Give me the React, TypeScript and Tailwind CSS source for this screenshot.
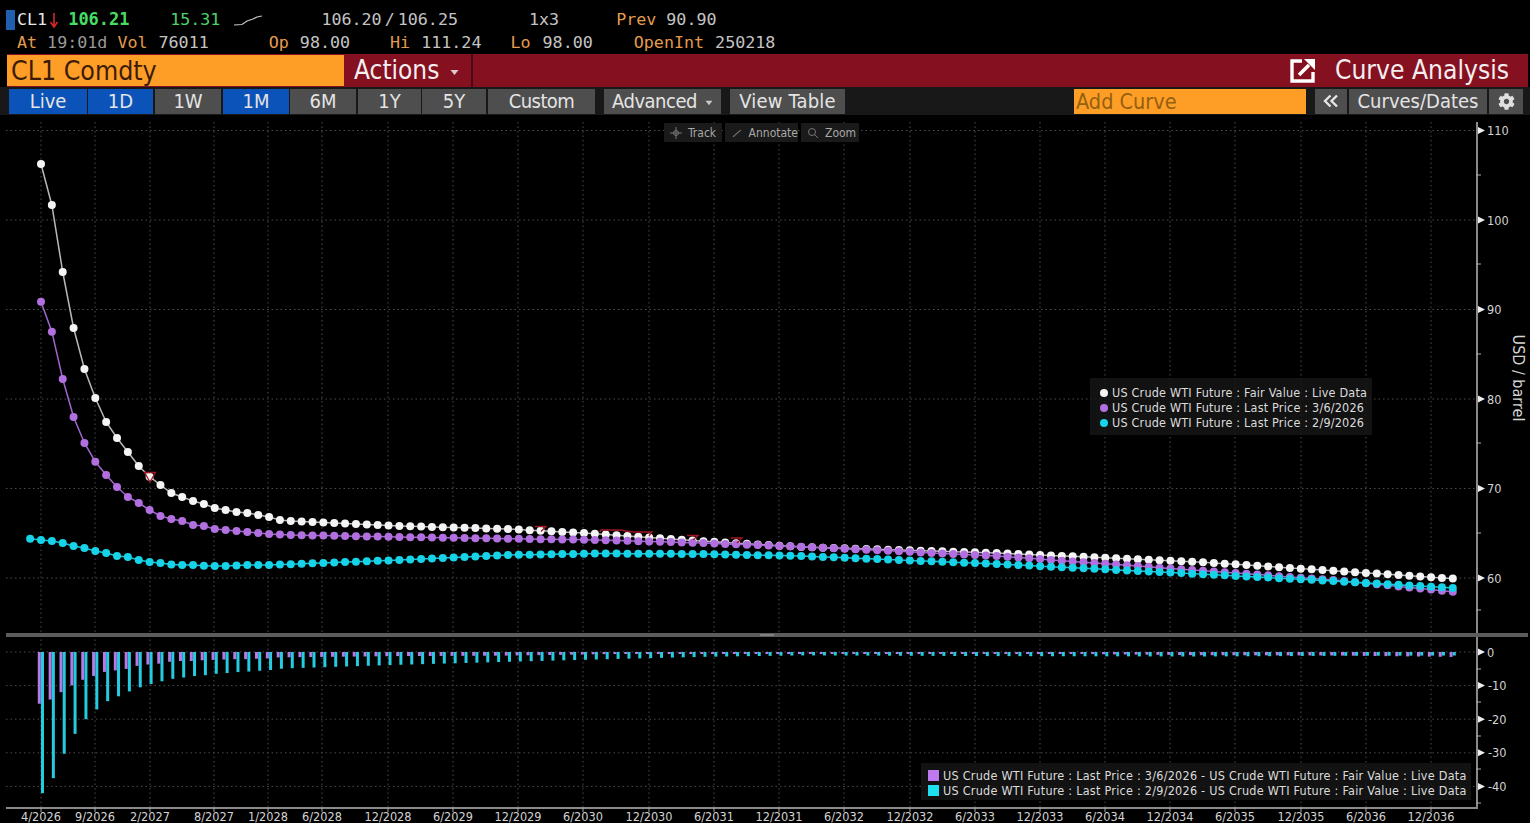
import { FaCog } from 'react-icons/fa'

const xOf = (i: number) => 41 + i * 10.86
const yOf = (v: number) => 578 - (v - 60) * 8.95

// anchors are [month index, pixel y] read off the chart
const interp = (pts: number[][], i: number) => {
  for (let k = 0; k < pts.length - 1; k++) {
    const [a, ya] = pts[k]
    const [b, yb] = pts[k + 1]
    if (i >= a && i <= b) return ya + ((yb - ya) * (i - a)) / (b - a)
  }
  return pts[pts.length - 1][1]
}

const head = (ys: number[], start = 0) => ys.map((y, i) => [i + start, y])

const whitePts = [
  ...head([164, 205, 272, 328, 369, 398, 422, 438, 452, 466, 476.7, 485, 493, 497, 501, 504, 508, 510, 512, 513, 515, 517, 520, 521]),
  [33, 526], [43, 529], [51.5, 534], [60.7, 541], [70, 547], [88, 553], [106.7, 562], [130, 578.6],
]
const purplePts = [
  ...head([301.7, 331.7, 379, 417, 443, 461.7, 475, 487, 497, 503, 510, 516, 519, 521, 525, 526, 529, 530, 531, 532, 533, 534]),
  [23, 535], [33, 537], [43, 538.7], [51.5, 540], [60.7, 543], [70, 546.7], [88, 556], [106.7, 570.5], [119, 580], [130, 591.7],
]
const cyanPts = [
  ...head([538.7, 540, 541, 543, 546, 548, 551, 553, 556, 557, 560, 562, 563, 564.5, 565, 565, 565.7, 566, 566, 565.5, 565, 565, 565], -1),
  [33, 560], [43, 555], [51.5, 553.5], [60.7, 554], [70, 556], [88, 564], [106.7, 574], [119, 581], [130, 588],
]

const idx = Array.from({ length: 131 }, (_, i) => i)
const white = idx.map(i => interp(whitePts, i))
const purple = idx.map(i => interp(purplePts, i))
const cyan = [-1, ...idx].map(i => interp(cyanPts, i))

const dates: [string, number][] = [
  ['4/2026', 41], ['9/2026', 95], ['2/2027', 150], ['8/2027', 214], ['1/2028', 268], ['6/2028', 322],
  ['12/2028', 388], ['6/2029', 453], ['12/2029', 518], ['6/2030', 583], ['12/2030', 649], ['6/2031', 714],
  ['12/2031', 779], ['6/2032', 844], ['12/2032', 910], ['6/2033', 975], ['12/2033', 1040], ['6/2034', 1105],
  ['12/2034', 1170], ['6/2035', 1235], ['12/2035', 1301], ['6/2036', 1366], ['12/2036', 1431],
]
const upper = [110, 100, 90, 80, 70, 60]
const lower = [0, -10, -20, -30, -40]
const lowerY = (v: number) => 652 - v * 3.36

const Caret = () => (
  <svg width="8" height="6" viewBox="0 0 9 7" className="ml-2 mt-1">
    <path d="M0.5 1 H8.5 L4.5 6 Z" fill="#c8c8c8" />
  </svg>
)

function Btn({ label, cls, caret }: { label: string; cls: string; caret?: boolean }) {
  return (
    <div className={`flex h-[25px] items-center justify-center text-[20px] text-[#e4e4e4] font-stretch-condensed ${cls}`}>
      {label}
      {caret && <Caret />}
    </div>
  )
}

function Curve({ ys, start, color, line }: { ys: number[]; start: number; color: string; line: string }) {
  const pts = ys.map((y, i) => [xOf(i + start), y])
  return (
    <g>
      <polyline points={pts.map(p => p.join(',')).join(' ')} fill="none" stroke={line} strokeWidth="1.5" />
      {pts.map(([x, y], i) => (
        <circle key={i} cx={x} cy={y} r="4" fill={color} />
      ))}
    </g>
  )
}

function Chart() {
  return (
    <svg width="1530" height="708" viewBox="0 115 1530 708" className="block">
      {/* grid */}
      <g stroke="#4c4c4c" strokeWidth="1" strokeDasharray="1.5 3">
        {dates.map(([d, x]) => (
          <line key={d} x1={x} x2={x} y1="122" y2="807" />
        ))}
        {upper.map(v => (
          <line key={v} x1="6" x2="1477" y1={yOf(v)} y2={yOf(v)} />
        ))}
        {lower.map(v => (
          <line key={v} x1="6" x2="1477" y1={lowerY(v)} y2={lowerY(v)} />
        ))}
      </g>

      {/* curves */}
      <Curve ys={white} start={0} color="#f4f4f4" line="#b8b8b8" />
      <Curve ys={purple} start={0} color="#b26fe0" line="#a066cc" />
      <Curve ys={cyan} start={-1} color="#17d3e8" line="#17c4d8" />

      {/* order markers */}
      <g fill="none" stroke="#a01626" strokeWidth="1.3">
        <path d="M144.5 472.5 H155.5 L150 482 Z" />
        <path d="M535 526.5 H546 L541 531.5" />
        <path d="M600 532 L601 530 H620 L632 532 H652 L649 536" />
        <path d="M687 535.5 H698 L693 540" />
        <path d="M731 538 H742 L737 543" />
      </g>

      {/* lower pane */}
      {idx.map(i => {
        const x = xOf(i)
        const pH = Math.max(2, (Math.abs(purple[i] - white[i]) / 8.95) * 3.36)
        const cH = Math.max(2, (Math.abs(cyan[i + 1] - white[i]) / 8.95) * 3.36)
        return (
          <g key={i}>
            <rect x={x - 3.2} y="652" width="3" height={pH} fill="#b57ae8" />
            <rect x={x} y="652" width="3" height={cH} fill="#25cbe0" />
          </g>
        )
      })}

      {/* axes */}
      <rect x="1476" y="122" width="2" height="686" fill="#8a8a8a" />
      <rect x="6" y="807" width="1472" height="2" fill="#8a8a8a" />
      <rect x="6" y="633" width="1522" height="4" fill="#5c5c5c" />
      <rect x="760" y="634" width="14" height="2" fill="#808080" />
      {dates.map(([d, x]) => (
        <line key={d} x1={x} x2={x} y1="808" y2="812" stroke="#aaa" />
      ))}
      {[175, 264, 354, 443, 533, 610, 669, 702, 736, 769, 803].map(y => (
        <line key={y} x1="1476" x2="1481" y1={y} y2={y} stroke="#aaa" />
      ))}
      {[...upper.map(yOf), ...lower.map(lowerY)].map(y => (
        <path key={y} d={`M1478 ${y - 3.5} L1485 ${y} L1478 ${y + 3.5} Z`} fill="#eee" />
      ))}

      {/* axis labels */}
      <g className="text-[12.6px] font-stretch-condensed" fill="#d4d4d4">
        {upper.map(v => (
          <text key={v} x="1487" y={yOf(v) + 4.5}>{v}</text>
        ))}
        {lower.map(v => (
          <text key={v} x={v === 0 ? 1487 : 1488} y={lowerY(v) + 4.5}>{v === 0 ? '0' : `-${-v}`}</text>
        ))}
        {dates.map(([d, x]) => (
          <text key={d} x={x} y="821" textAnchor="middle">{d}</text>
        ))}
        <text transform="translate(1513 378) rotate(90)" textAnchor="middle" className="text-[16px]">USD / barrel</text>
      </g>
    </svg>
  )
}

export default function App() {
  return (
    <div className="h-[823px] w-[1530px] overflow-hidden bg-black font-['DejaVu_Sans',sans-serif]">
      {/* quote lines */}
      <div className="h-[54px] pl-[6px] pt-[8px] font-['DejaVu_Sans_Mono',monospace] text-[16.7px] leading-[23px]">
        <div className="flex h-[23px] items-center text-[#c4c4c4]">
          <div className="h-[20px] w-[9px] bg-[#1f5fb0]" />
          <span className="ml-[2px] text-[#e8e8e8]">CL1</span>
          <svg width="10" height="16" viewBox="0 0 10 16" className="ml-[2px]">
            <path d="M5 1 V14 M1.5 10 L5 15 L8.5 10" fill="none" stroke="#d8262c" strokeWidth="1.6" />
          </svg>
          <span className="ml-[9px] w-[70px] text-[17px] font-bold text-[#45de63]">106.21</span>
          <span className="ml-[32px] text-[#4fd06c]">15.31</span>
          <svg width="30" height="14" viewBox="0 0 30 14" className="ml-[13px]">
            <path d="M1 12 L9 11.5 L14 8 L20 6 L24 4 L29 3" fill="none" stroke="#c8c8c8" strokeWidth="1.2" />
          </svg>
          <span className="ml-[58px]">106.20</span>
          <span className="mx-[3px]">/</span>
          <span>106.25</span>
          <span className="ml-[71px]">1x3</span>
          <span className="ml-[57px] text-[#e39b4f]">Prev</span>
          <span className="ml-[10px]">90.90</span>
        </div>
        <div className="flex h-[23px] items-center pl-[11px] text-[#c4c4c4]">
          <span className="text-[#e39b4f]">At</span>
          <span className="ml-[10px] text-[#9a9a9a]">19:01d</span>
          <span className="ml-[10px] text-[#e39b4f]">Vol</span>
          <span className="ml-[11px]">76011</span>
          <span className="ml-[60px] text-[#e39b4f]">Op</span>
          <span className="ml-[11px]">98.00</span>
          <span className="ml-[40px] text-[#e39b4f]">Hi</span>
          <span className="ml-[11px]">111.24</span>
          <span className="ml-[29px] text-[#e39b4f]">Lo</span>
          <span className="ml-[12px]">98.00</span>
          <span className="ml-[41px] text-[#e39b4f]">OpenInt</span>
          <span className="ml-[11px]">250218</span>
        </div>
      </div>

      {/* title bar */}
      <div className="ml-[7px] flex h-[33px] w-[1521px] bg-[#85101f] text-[#f4eef0] font-stretch-condensed">
        <div className="mt-[1px] flex h-[31px] w-[337px] items-center bg-[#ff9e27] pl-[4px] text-[26.5px] text-[#3c1c08]">CL1 Comdty</div>
        <div className="flex w-[127px] items-center pl-[10px] text-[26px]">
          Actions
          <svg width="9" height="7" viewBox="0 0 9 7" className="ml-[11px] mt-1">
            <path d="M0.5 1 H8.5 L4.5 6 Z" fill="#e0c8cc" />
          </svg>
        </div>
        <div className="w-[2px] bg-[#4a0a14]" />
        <div className="flex flex-1 items-center justify-end pr-[19px]">
          <svg width="26" height="25" viewBox="0 0 26 25" className="mr-[19px]">
            <path d="M12 3 H2 V23 H23 V14" fill="none" stroke="#fff" strokeWidth="3.4" />
            <path d="M9 17 L19 7" stroke="#fff" strokeWidth="3.6" fill="none" />
            <path d="M14 1 H25 V12 Z" fill="#fff" />
          </svg>
          <span className="text-[26.2px]">Curve Analysis</span>
        </div>
      </div>

      {/* toolbar */}
      <div className="flex h-[28px] items-center bg-[#181818] pl-[9px]">
        <Btn label="Live" cls="w-[78px] bg-[#0b53b8]" />
        <Btn label="1D" cls="ml-px w-[65px] bg-[#0b53b8]" />
        <Btn label="1W" cls="ml-[2px] w-[66px] bg-[#4e4e4e]" />
        <Btn label="1M" cls="ml-[2px] w-[66px] bg-[#0b53b8]" />
        <Btn label="6M" cls="ml-px w-[66px] bg-[#4e4e4e]" />
        <Btn label="1Y" cls="ml-[2px] w-[63px] bg-[#4e4e4e]" />
        <Btn label="5Y" cls="ml-px w-[64px] bg-[#4e4e4e]" />
        <Btn label="Custom" cls="ml-[2px] w-[107px] bg-[#4e4e4e] tracking-[-0.6px]" />
        <Btn label="Advanced" cls="ml-[9px] w-[117px] bg-[#4e4e4e] tracking-[-0.5px]" caret />
        <Btn label="View Table" cls="ml-[9px] w-[115px] bg-[#4e4e4e] tracking-[0.2px]" />
        <div className="ml-[229px] flex h-[25px] w-[232px] items-center bg-[#ff9e27] pl-[2px] pt-[2px] text-[21.5px] text-[#94600f] font-stretch-condensed">Add Curve</div>
        <div className="ml-[9px] flex h-[25px] w-[32px] items-center justify-center bg-[#4e4e4e]">
          <svg width="16" height="14" viewBox="0 0 16 14">
            <path d="M7.5 1.5 L2 7 L7.5 12.5 M14 1.5 L8.5 7 L14 12.5" fill="none" stroke="#e4e4e4" strokeWidth="2.4" />
          </svg>
        </div>
        <Btn label="Curves/Dates" cls="ml-[2px] w-[138px] bg-[#4e4e4e]" />
        <div className="ml-[2px] flex h-[25px] w-[34px] items-center justify-center bg-[#4e4e4e] text-[#e0e0e0]">
          <FaCog size={17} />
        </div>
      </div>

      {/* chart */}
      <div className="relative">
        <Chart />

        {/* chart tools */}
        <div className="absolute left-[664px] top-[8px] flex h-[19px] gap-[3px] text-[12px] text-[#a8a8a8] font-stretch-condensed">
          <div className="flex w-[58px] items-center bg-[#1a1a1a] pl-[6px]">
            <svg width="12" height="12" viewBox="0 0 12 12" className="mr-[6px]">
              <path d="M6 0 V12 M0 6 H12" stroke="#777" />
              <circle cx="6" cy="6" r="2.5" fill="none" stroke="#777" />
            </svg>
            Track
          </div>
          <div className="flex w-[73px] items-center bg-[#1a1a1a] pl-[6px]">
            <svg width="12" height="12" viewBox="0 0 12 12" className="mr-[6px]">
              <path d="M2 10 L10 3" stroke="#777" strokeWidth="1.2" />
            </svg>
            Annotate
          </div>
          <div className="flex w-[58px] items-center bg-[#1a1a1a] pl-[6px]">
            <svg width="12" height="12" viewBox="0 0 12 12" className="mr-[6px]">
              <circle cx="5" cy="5" r="3.5" fill="none" stroke="#777" />
              <path d="M8 8 L11 11" stroke="#777" />
            </svg>
            Zoom
          </div>
        </div>

        {/* curve legend */}
        <div className="absolute left-[1090px] top-[263px] flex h-[57px] w-[282px] flex-col justify-center bg-[#161616]/80 pl-[10px] pt-[2px] text-[12.5px] leading-[15px] tracking-[0.2px] text-[#dcdcdc] font-stretch-condensed">
          {[
            ['US Crude WTI Future : Fair Value : Live Data', 'bg-[#f4f4f4]'],
            ['US Crude WTI Future : Last Price : 3/6/2026', 'bg-[#b26fe0]'],
            ['US Crude WTI Future : Last Price : 2/9/2026', 'bg-[#17d3e8]'],
          ].map(([t, c]) => (
            <div key={t} className="flex items-center whitespace-nowrap">
              <span className={`mr-[4px] h-[8px] w-[8px] rounded-full ${c}`} />
              {t}
            </div>
          ))}
        </div>

        {/* spread legend */}
        <div className="absolute left-[921px] top-[648px] flex h-[37px] w-[550px] flex-col justify-center bg-[#161616]/80 pl-[7px] pt-[2px] text-[12.5px] leading-[15px] tracking-[0.25px] text-[#dcdcdc] font-stretch-condensed">
          {[
            ['US Crude WTI Future : Last Price : 3/6/2026 - US Crude WTI Future : Fair Value : Live Data', 'bg-[#c07af0]'],
            ['US Crude WTI Future : Last Price : 2/9/2026 - US Crude WTI Future : Fair Value : Live Data', 'bg-[#1fe0f0]'],
          ].map(([t, c]) => (
            <div key={t} className="flex items-center whitespace-nowrap">
              <span className={`mr-[4px] h-[11px] w-[11px] ${c}`} />
              {t}
            </div>
          ))}
        </div>
      </div>
    </div>
  )
}
